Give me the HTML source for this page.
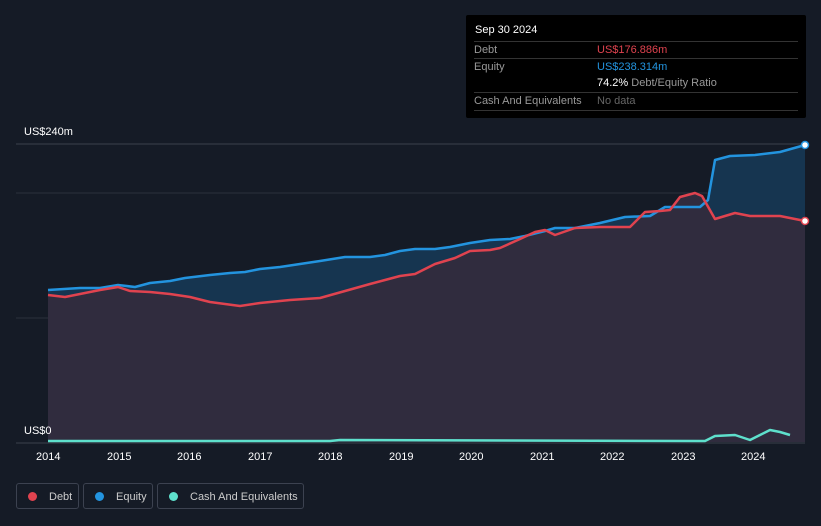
<!DOCTYPE html><html><head><style>
body{margin:0;background:#151b26;font-family:"Liberation Sans",sans-serif;}
#c{position:relative;width:821px;height:526px;overflow:hidden;background:#151b26}
.t{position:absolute;font-size:11px;color:#fff}
#tip{position:absolute;left:466px;top:15px;width:340px;height:103px;background:#000;border-radius:2px}
.row{position:absolute;left:8px;width:324px;border-top:1px solid #333;height:17px;font-size:11px;color:#999;line-height:17px}
.leg{position:absolute;top:483px;height:26px;border:1px solid #3c4250;border-radius:3px;font-size:11px;color:#ccc;line-height:26px;box-sizing:border-box;white-space:nowrap}
.dot{display:inline-block;width:9px;height:9px;border-radius:50%;margin:0 12px 0 11px;vertical-align:-1px}
</style></head><body><div id="c">
<svg width="821" height="526" style="position:absolute;left:0;top:0">
<line x1="16" y1="144" x2="805" y2="144" stroke="#3a404c"/>
<line x1="16" y1="193" x2="805" y2="193" stroke="#2a303c"/>
<line x1="16" y1="318" x2="805" y2="318" stroke="#2a303c"/>
<line x1="16" y1="443" x2="805" y2="443" stroke="#3a404c"/>
<polygon fill="#163550" points="48,290 80,288 100,288 118,285 135,287 150,283 170,281 185,278 210,275 230,273 245,272 260,269 280,267 300,264 320,261 345,257 370,257 385,255 400,251 415,249 435,249 450,247 470,243 490,240 510,239 525,236 545,231 555,228 575,228 600,223 625,217 650,216 665,207 700,207 708,200 715,160 730,156 755,155 780,152 805,145 805,442 48,442"/>
<polygon fill="#302c3e" points="48,295 65,297 85,293 100,290 118,287 130,291 150,292 170,294 190,297 210,302 240,306 260,303 290,300 320,298 345,291 370,284 385,280 400,276 415,274 435,264 455,258 470,251 490,250 500,248 520,239 535,232 545,230 555,235 575,228 600,227 630,227 645,212 660,211 670,210 680,197 695,193 702,196 715,219 735,213 750,216 780,216 805,221 805,442 48,442"/>
<polyline fill="none" stroke="#2394df" stroke-width="2.5" stroke-linejoin="round" points="48,290 80,288 100,288 118,285 135,287 150,283 170,281 185,278 210,275 230,273 245,272 260,269 280,267 300,264 320,261 345,257 370,257 385,255 400,251 415,249 435,249 450,247 470,243 490,240 510,239 525,236 545,231 555,228 575,228 600,223 625,217 650,216 665,207 700,207 708,200 715,160 730,156 755,155 780,152 805,145"/>
<polyline fill="none" stroke="#e0434f" stroke-width="2.5" stroke-linejoin="round" points="48,295 65,297 85,293 100,290 118,287 130,291 150,292 170,294 190,297 210,302 240,306 260,303 290,300 320,298 345,291 370,284 385,280 400,276 415,274 435,264 455,258 470,251 490,250 500,248 520,239 535,232 545,230 555,235 575,228 600,227 630,227 645,212 660,211 670,210 680,197 695,193 702,196 715,219 735,213 750,216 780,216 805,221"/>
<polyline fill="none" stroke="#5ee0cc" stroke-width="2.5" stroke-linejoin="round" points="48,441 330,441 340,440 700,441 705,441 715,436 735,435 750,440 760,435 770,430 780,432 790,435"/>
<circle cx="805" cy="145" r="3.5" fill="#fff" stroke="#2394df" stroke-width="1.5"/>
<circle cx="805" cy="221" r="3.5" fill="#fff" stroke="#e0434f" stroke-width="1.5"/>
</svg>
<div class="t" style="left:24px;top:126px">US$240m</div>
<div class="t" style="left:24px;top:425px">US$0</div>
<div class="t" style="left:36px;top:451px">2014</div><div class="t" style="left:107px;top:451px">2015</div><div class="t" style="left:177px;top:451px">2016</div><div class="t" style="left:248px;top:451px">2017</div><div class="t" style="left:318px;top:451px">2018</div><div class="t" style="left:389px;top:451px">2019</div><div class="t" style="left:459px;top:451px">2020</div><div class="t" style="left:530px;top:451px">2021</div><div class="t" style="left:600px;top:451px">2022</div><div class="t" style="left:671px;top:451px">2023</div><div class="t" style="left:741px;top:451px">2024</div>
<div id="tip">
<div style="position:absolute;left:9px;top:9px;font-size:11px;color:#fff">Sep 30 2024</div>
<div class="row" style="top:26px">Debt<span style="position:absolute;left:123px;color:#e0434f">US$176.886m</span></div>
<div class="row" style="top:43px">Equity<span style="position:absolute;left:123px;color:#2394df">US$238.314m</span></div>
<div class="row" style="top:60px;border:0"><span style="position:absolute;left:123px;color:#999"><b style="color:#fff;font-weight:normal">74.2%</b> Debt/Equity Ratio</span></div>
<div class="row" style="top:77px">Cash And Equivalents<span style="position:absolute;left:123px;color:#666">No data</span></div>
<div class="row" style="top:95px;height:0"></div>
</div>
<div class="leg" style="left:16px;width:63px"><span class="dot" style="background:#e0434f"></span>Debt</div>
<div class="leg" style="left:83px;width:70px"><span class="dot" style="background:#2394df"></span>Equity</div>
<div class="leg" style="left:157px;width:147px"><span class="dot" style="background:#5ee0cc"></span>Cash And Equivalents</div>
</div></body></html>
